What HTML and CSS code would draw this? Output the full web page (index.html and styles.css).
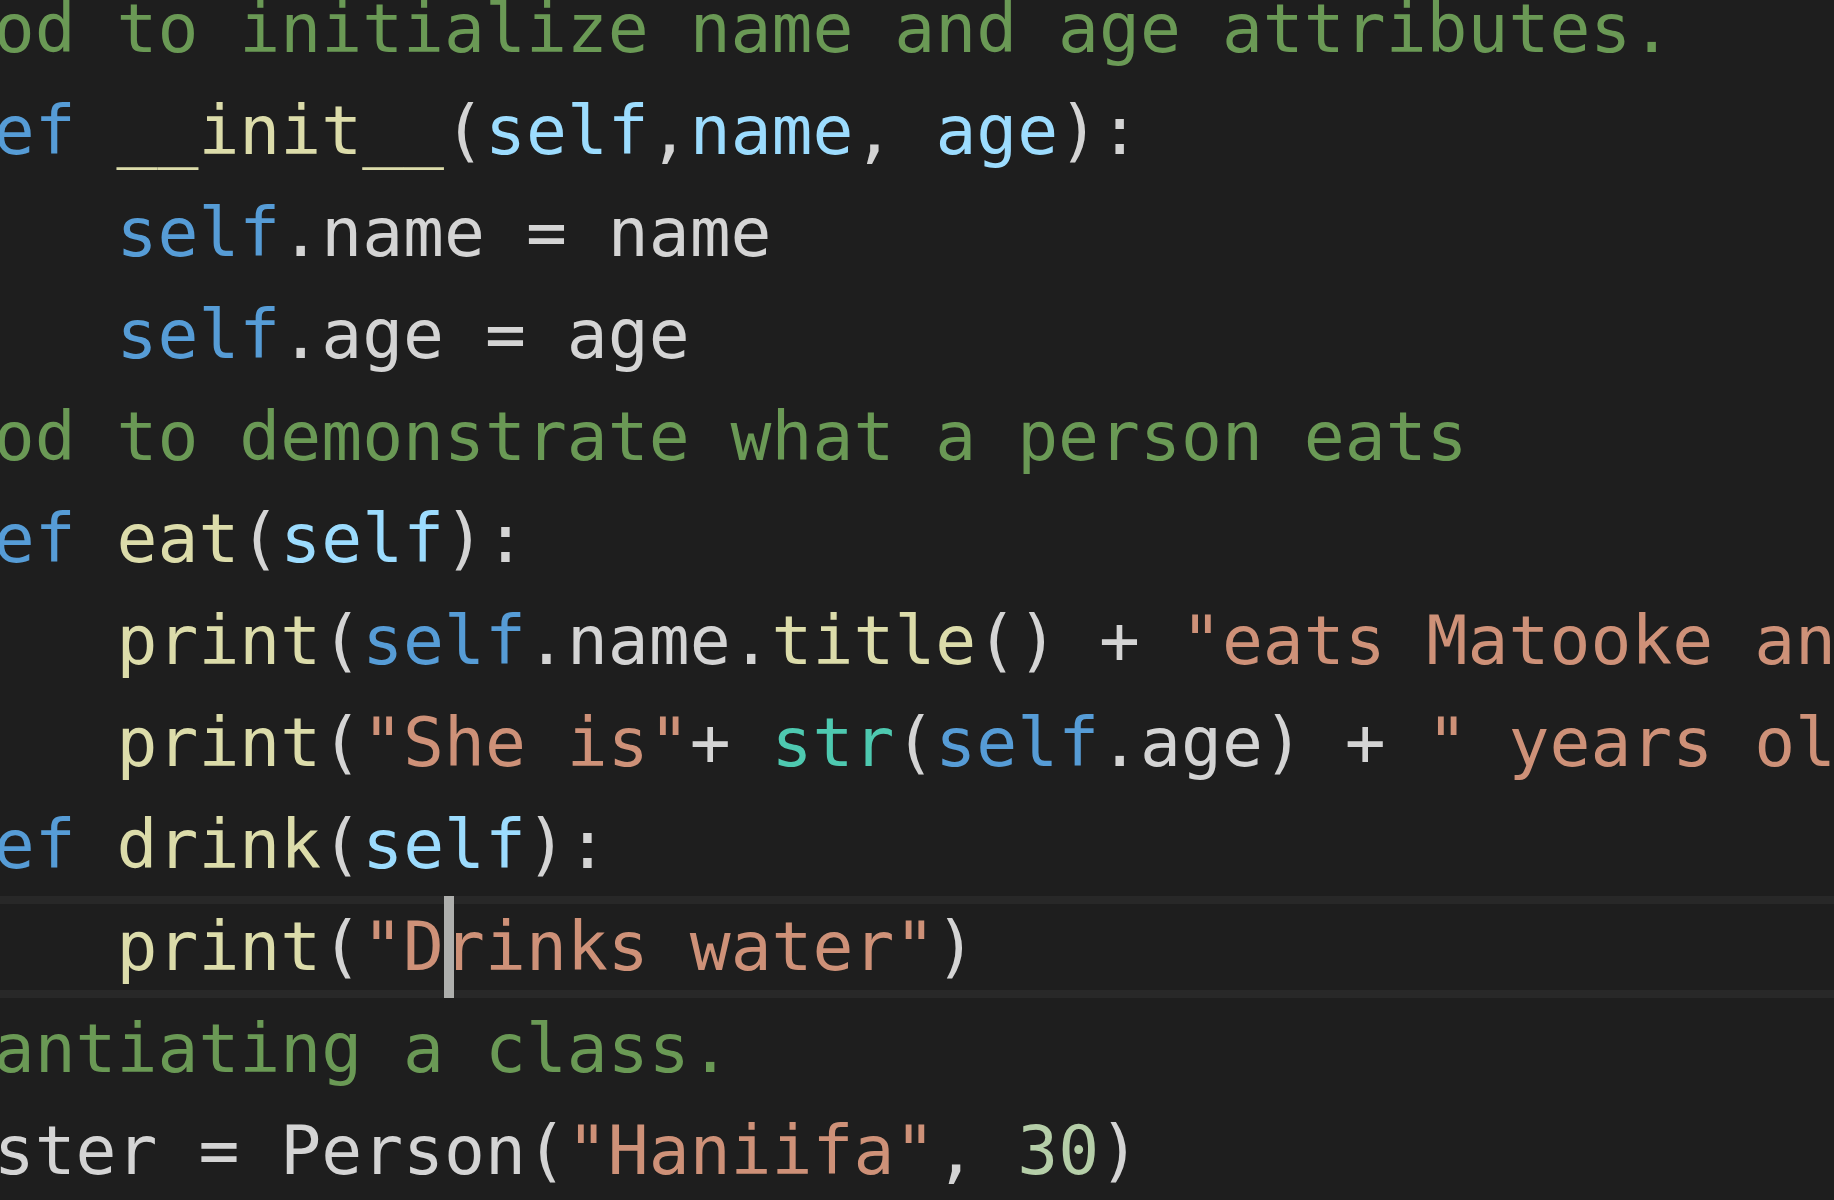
FILE: index.html
```html
<!DOCTYPE html>
<html lang="en">
<head>
<meta charset="utf-8">
<title>person.py</title>
<link rel="stylesheet" href="styles.css">
</head>
<body>
<div class="editor">
  <div class="code">
    <div class="line"><span class="cm">#Method to initialize name and age attributes.</span></div>
    <div class="line">    <span class="kw">def</span> <span class="fn">__init__</span>(<span class="pr">self</span>,<span class="pr">name</span>, <span class="pr">age</span>):</div>
    <div class="line">        <span class="kw">self</span>.name = name</div>
    <div class="line">        <span class="kw">self</span>.age = age</div>
    <div class="line"><span class="cm">#Method to demonstrate what a person eats</span></div>
    <div class="line">    <span class="kw">def</span> <span class="fn">eat</span>(<span class="pr">self</span>):</div>
    <div class="line">        <span class="fn">print</span>(<span class="kw">self</span>.name.<span class="fn">title</span>() + <span class="st">"eats Matooke and beans"</span>)</div>
    <div class="line">        <span class="fn">print</span>(<span class="st">"She is"</span>+ <span class="bi">str</span>(<span class="kw">self</span>.age) + <span class="st">" years old"</span>)</div>
    <div class="line">    <span class="kw">def</span> <span class="fn">drink</span>(<span class="pr">self</span>):</div>
    <div class="line current">        <span class="fn">print</span>(<span class="st">"D<span class="cursor"></span>rinks water"</span>)</div>
    <div class="line"><span class="cm">#Instantiating a class.</span></div>
    <div class="line">youngster = Person(<span class="st">"Haniifa"</span>, <span class="nu">30</span>)</div>
  </div>
</div>
</body>
</html>
```

FILE: styles.css
```css
html, body {
  margin: 0;
  padding: 0;
  background: #1e1e1e;
  overflow: hidden;
}

.editor {
  width: 1834px;
  height: 1200px;
  overflow: hidden;
  background: #1e1e1e;
}

.code {
  margin: -22px 0 0 -211px;
  font-family: "DejaVu Sans Mono", "Liberation Mono", monospace;
  font-size: 68px;
  line-height: 102px;
  color: #d4d4d4;
}

.line {
  height: 102px;
  white-space: pre;
}

.line.current {
  box-shadow: inset 0 8px 0 #282828, inset 0 -8px 0 #282828;
}

.cm { color: #6a9955; }
.kw { color: #569cd6; }
.fn { color: #dcdcaa; }
.pr { color: #9cdcfe; }
.st { color: #ce9178; }
.bi { color: #4ec9b0; }
.nu { color: #b5cea8; }

.cursor {
  display: inline-block;
  position: relative;
  width: 0;
  height: 102px;
  vertical-align: top;
}

.cursor::after {
  content: "";
  position: absolute;
  left: 0;
  top: 0;
  width: 10px;
  height: 102px;
  background: #aeafad;
}
```
